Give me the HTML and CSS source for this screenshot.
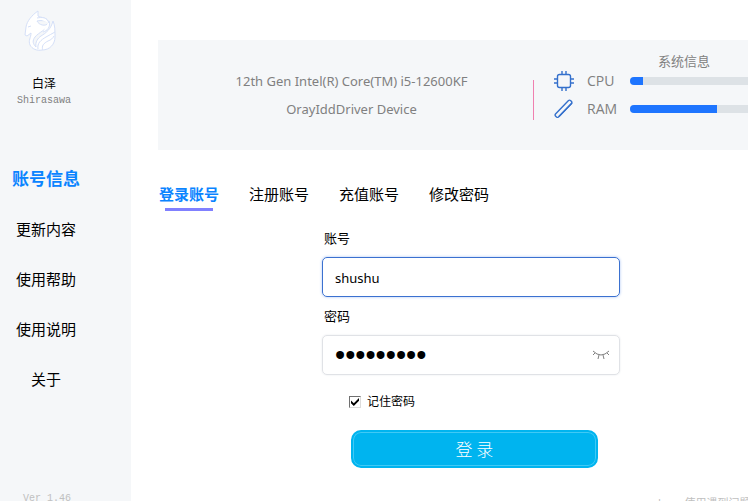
FILE: index.html
```html
<!DOCTYPE html>
<html lang="zh-CN">
<head>
<meta charset="utf-8">
<title>白泽</title>
<link rel="stylesheet" href="styles.css">
</head>
<body>
<div class="app">
  <aside class="sidebar">
    <svg class="logo" viewBox="0 0 36 44" aria-hidden="true">
      <path d="M15 2C9 6 4 12 3 18C3 21 2 23 2 26L4 27L8 24C8 29 5 31 7 36C9 40 14 42 19 41C27 41 32 35 32 28C32 22 32 16 30 12C28 20 23 24 18 27C15 29 12 33 13 38C10 35 9 32 12 28C16 23 24 21 26 14C22 18 16 16 14 12C18 11 22 12 25 12C23 8 18 9 15 7Z"/>
      <path d="M15 40C14 34 18 31 23 28C26 26 29 25 32 23M20 41C18 37 21 34 25 32C28 31 30 29 31 27M14 9C19 8 24 8 26 14M5 18L8 17M26 12C28 18 24 22 20 23"/>
    </svg>
    <div class="name">白泽</div>
    <div class="alias">Shirasawa</div>
    <nav class="menu">
      <a class="active" href="#account">账号信息</a>
      <a href="#updates">更新内容</a>
      <a href="#help">使用帮助</a>
      <a href="#guide">使用说明</a>
      <a href="#about">关于</a>
    </nav>
    <div class="version">Ver 1.46</div>
  </aside>
  <main class="main">
    <section class="system">
      <div class="devices">
        <div>12th Gen Intel(R) Core(TM) i5-12600KF</div>
        <div>OrayIddDriver Device</div>
      </div>
      <div class="divider"></div>
      <div class="usage">
        <h2>系统信息</h2>
        <div class="meter">
          <svg class="icon" viewBox="0 0 20 20" aria-hidden="true"><rect x="3.5" y="3.5" width="13" height="13" rx="2"/><path d="M8 0v3M12 0v3M8 17v3M12 17v3M0 8h3M0 12h3M17 8h3M17 12h3"/></svg>
          <span>CPU</span>
          <div class="track"><div class="fill cpu"></div></div>
        </div>
        <div class="meter">
          <svg class="icon" viewBox="0 0 20 20" aria-hidden="true"><path d="M1.500 15L14.500 1.500Q15.500 .7 16.500 1.500L17.500 2.500Q18.300 3.500 17.500 4.500L4.500 18Q3.500 18.800 2.500 18L1.500 17Q.7 16 1.500 15Z"/><path d="M5 17.500L18 4"/></svg>
          <span>RAM</span>
          <div class="track"><div class="fill ram"></div></div>
        </div>
      </div>
    </section>
    <nav class="tabs">
      <a class="active" href="#login">登录账号</a>
      <a href="#register">注册账号</a>
      <a href="#recharge">充值账号</a>
      <a href="#password">修改密码</a>
    </nav>
    <form class="login">
      <label for="user">账号</label>
      <div class="field focused"><input id="user" type="text" value="shushu"></div>
      <label for="pass">密码</label>
      <div class="field">
        <input id="pass" type="password" value="123456789">
        <button class="reveal" type="button" aria-label="显示密码">
          <svg viewBox="0 0 18 10" aria-hidden="true"><path d="M1 1Q9 9 17 1M3 3L1 5M15 3L17 5M7 5L6 9M11 5L12 9"/></svg>
        </button>
      </div>
      <div class="remember"><input id="remember" type="checkbox" checked><label for="remember">记住密码</label></div>
      <button class="submit" type="button">登 录</button>
    </form>
    <footer class="notice">bug:使用遇到问题</footer>
  </main>
</div>
</body>
</html>
```
FILE: styles.css
```css
* { box-sizing: border-box; }

body {
  margin: 0;
  background: #fff;
  color: #000;
  font: 15px/20px "Open Sans", "Noto Sans CJK SC", sans-serif;
}

a { color: inherit; text-decoration: none; }

.app {
  display: flex;
  height: 100vh;
  overflow: hidden;
}

.sidebar {
  display: flex;
  flex: 0 0 131px;
  flex-direction: column;
  background: #f5f7f9;
}

.sidebar > * { flex: none; }

.logo {
  width: 36px;
  height: 44px;
  margin: 9px 0 21px 23px;
  fill: #fff;
  stroke: #d5e0f8;
  stroke-width: 1;
}

.name {
  width: 88px;
  font-size: 12px;
  text-align: center;
}

.alias {
  width: 88px;
  color: #808080;
  font: 10px/14px "Liberation Mono", monospace;
  text-align: center;
}

.menu {
  display: flex;
  flex-direction: column;
  width: 92px;
  margin-top: 46px;
  line-height: 50px;
  text-align: center;
}

.menu .active {
  height: 50px;
  color: #0a84ff;
  font-size: 17px;
  font-weight: 700;
}

.version {
  width: 94px;
  margin-top: 88px;
  color: #c0c0c0;
  font: 10px/14px "Liberation Mono", monospace;
  text-align: center;
}

.main {
  display: flex;
  flex: 1;
  flex-direction: column;
  min-width: 0;
  padding: 40px 0 0 27px;
}

.system {
  display: flex;
  flex: none;
  height: 110px;
  background: #f5f7f9;
  color: #808080;
  font-size: 13px;
}

.devices {
  flex: 1;
  padding: 27px 0 0 12px;
  font-family: "Noto Sans", sans-serif;
  line-height: 28px;
  text-align: center;
}

.divider {
  width: 1px;
  height: 40px;
  margin-top: 40px;
  background: #f080b0;
}

.usage {
  width: 214px;
  padding: 11px 0 0 20px;
}

.usage h2 {
  margin: 0 0 -4px;
  padding-left: 104px;
  font-size: 13px;
  font-weight: 400;
}

.meter {
  display: flex;
  align-items: center;
  height: 28px;
  font-size: 14px;
}

.icon {
  width: 20px;
  height: 20px;
  margin-right: 13px;
  fill: none;
  stroke: #3470cc;
  stroke-width: 1.4;
}

.meter span { width: 43px; }

.track {
  flex: 1;
  height: 8px;
  overflow: hidden;
  border-radius: 4px 0 0 4px;
  background: #dde2e6;
}

.fill { height: 8px; background: #1e75ff; }
.cpu { width: 11%; }
.ram { width: 74%; }

.tabs {
  display: flex;
  gap: 30px;
  padding: 34px 0 0 1px;
}

.tabs a { height: 27px; line-height: 20px; }

.tabs .active {
  display: flex;
  flex-direction: column;
  align-items: center;
  color: #0a84ff;
  font-weight: 700;
}

.tabs .active::after {
  width: 48px;
  height: 3px;
  margin-top: 4px;
  background: #8080ff;
  content: "";
}

.login {
  display: flex;
  flex-direction: column;
  width: 298px;
  margin: 17px 0 0 164px;
}

.login label { padding-left: 2px; font-size: 13px; }

.field {
  display: flex;
  align-items: center;
  height: 40px;
  margin: 9px 0;
  padding: 0 9px 0 12px;
  border: 1px solid #e0e2e6;
  border-radius: 5px;
  box-shadow: 0 0 2px #e4e6ea;
}

.focused {
  border-color: #3b71d0;
  box-shadow: 0 0 3px #a9c3f2;
}

.field input {
  flex: 1;
  min-width: 0;
  padding: 2px 0 0;
  border: 0;
  outline: 0;
  background: none;
  font: 13px/20px "Noto Sans", sans-serif;
}

.field input[type="password"] {
  height: 38px;
  padding: 0;
  font: 29px/38px "Liberation Sans", sans-serif;
}

.reveal {
  width: 18px;
  height: 10px;
  padding: 0;
  border: 0;
  background: none;
}

.reveal svg {
  display: block;
  fill: none;
  stroke: #808080;
}

.remember {
  display: flex;
  align-items: center;
  margin: 8px 0 18px 27px;
}

.remember input {
  display: grid;
  place-items: center;
  width: 12px;
  height: 12px;
  margin: 0 4px 0 0;
  border: 1px solid #dcdcdc;
  border-top-color: #707070;
  border-left-color: #707070;
  appearance: none;
}

.remember input:checked::before {
  width: 8px;
  height: 8px;
  background: #000;
  clip-path: polygon(0 30%, 35% 65%, 100% 0, 100% 35%, 35% 100%, 0 65%);
  content: "";
}

.remember label { font-size: 12px; }

.submit {
  height: 38px;
  margin: 0 22px 0 29px;
  padding: 0;
  border: 2px solid #00b4ef;
  border-radius: 10px;
  background: #00b4ef;
  box-shadow: inset 0 0 0 1px #40c9f5;
  color: #fff;
  font: 300 17px/20px "Noto Sans CJK SC", sans-serif;
}

.notice {
  flex: none;
  margin: 28px 0 0 500px;
  color: #c0c0c0;
  font: 11px/16px "Liberation Mono", "Noto Sans CJK SC", monospace;
  white-space: nowrap;
}
```
